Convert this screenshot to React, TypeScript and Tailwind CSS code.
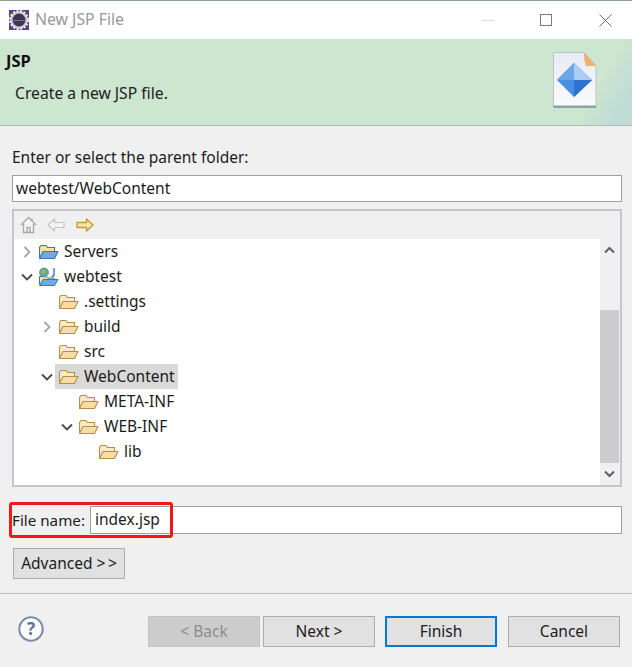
const FONT = "[font-family:'Noto_Sans','Open_Sans',sans-serif]";

function Folder({ blue = false }: { blue?: boolean }) {
  const back = blue ? "#f9e2a6" : "#fbeac4";
  const front = blue ? "#6fa9e6" : "#f6dca6";
  const line = blue ? "#3b74b0" : "#b58d4e";
  return (
    <svg width="20" height="16" viewBox="0 0 20 16" className="shrink-0">
      <path d="M0.5 13.5V3.5L2 1.5H7L8.5 3.5H15.5V7" fill={back} stroke={line} strokeWidth="1.1" />
      <path d="M0.5 14.5L4 7.5H19L15.5 14.5Z" fill={front} stroke={line} strokeWidth="1.1" strokeLinejoin="round" />
    </svg>
  );
}

function ProjectIcon() {
  return (
    <svg width="20" height="20" viewBox="0 0 20 20" className="shrink-0">
      <path d="M0.5 17.5V9.5H7L8.5 11H15V13" fill="#f9e2a6" stroke="#3b74b0" />
      <path d="M0.5 18.5L4 12.5H19L15.5 18.5Z" fill="#6fa9e6" stroke="#3b74b0" strokeLinejoin="round" />
      <circle cx="5" cy="5.5" r="4.5" fill="#5aa6a0" stroke="#6b7f80" strokeWidth="0.7" />
      <path d="M2.5 3.5L5.5 2.5L6.5 5L4 7.5Z" fill="#8ec25a" />
      <path d="M15 1V7.5Q15 9.5 12.5 9.5" fill="none" stroke="#4a78b8" strokeWidth="1.4" />
    </svg>
  );
}

function Chevron({ open }: { open: boolean }) {
  return (
    <svg width="12" height="12" viewBox="0 0 12 12" className="shrink-0">
      {open ? (
        <path d="M1 3.5L6 8.5L11 3.5" fill="none" stroke="#4a4a4a" strokeWidth="1.9" />
      ) : (
        <path d="M3.5 1L8.5 6L3.5 11" fill="none" stroke="#a8a8a8" strokeWidth="1.9" />
      )}
    </svg>
  );
}

const rows: { label: string; pl: string; chev?: boolean; open?: boolean; icon: string; sel?: boolean }[] = [
  { label: "Servers", pl: "pl-[7px]", chev: true, open: false, icon: "blue" },
  { label: "webtest", pl: "pl-[7px]", chev: true, open: true, icon: "project" },
  { label: ".settings", pl: "pl-[41px]", icon: "folder" },
  { label: "build", pl: "pl-[27px]", chev: true, open: false, icon: "folder" },
  { label: "src", pl: "pl-[41px]", icon: "folder" },
  { label: "WebContent", pl: "pl-[27px]", chev: true, open: true, icon: "folder", sel: true },
  { label: "META-INF", pl: "pl-[61px]", icon: "folder" },
  { label: "WEB-INF", pl: "pl-[47px]", chev: true, open: true, icon: "folder" },
  { label: "lib", pl: "pl-[81px]", icon: "folder" },
];

function Row({ r }: { r: (typeof rows)[number] }) {
  return (
    <div className={`h-[25px] flex items-center ${r.pl}`}>
      {r.chev && <Chevron open={!!r.open} />}
      <div className={`flex items-center h-[25px] pl-[4px] ${r.chev ? "ml-[2px]" : ""} ${r.sel ? "bg-[#d9d9d9]" : ""}`}>
        <div className="w-[25px] flex items-center">
          {r.icon === "project" ? <ProjectIcon /> : <Folder blue={r.icon === "blue"} />}
        </div>
        <span className="pr-[3px] text-[15.5px] text-[#1c1c1c]">{r.label}</span>
      </div>
    </div>
  );
}

function Btn({ label, variant = "normal" }: { label: string; variant?: "normal" | "disabled" | "primary" }) {
  const cls =
    variant === "disabled"
      ? "bg-[#cccccc] border-[#c4c4c4] text-[#8c8c8c] border"
      : variant === "primary"
        ? "bg-[#e1e1e1] border-[#0078d7] border-2 text-[#1c1c1c]"
        : "bg-[#e1e1e1] border-[#adadad] border text-[#1c1c1c]";
  return (
    <div className={`w-[112px] h-[31px] flex items-center justify-center text-[15.5px] ${cls}`}>{label}</div>
  );
}

export default function App() {
  return (
    <div className={`w-[632px] h-[667px] bg-[#f0f0f0] flex flex-col overflow-hidden ${FONT}`}>
      <div className="h-[1px] bg-[#8ba08f]" />
      {/* Title bar */}
      <div className="h-[38px] bg-white flex items-center pl-[9px]">
        <svg width="20" height="20" viewBox="0 0 20 20" className="shrink-0">
          <rect width="20" height="20" fill="#5b3f86" />
          <circle cx="10" cy="10" r="9" fill="#c9c9cf" />
          <circle cx="10" cy="10" r="9" fill="none" stroke="#eeeeee" strokeWidth="2" strokeDasharray="2 1.6" />
          <circle cx="10" cy="10" r="6.5" fill="#3d3550" />
          <path d="M4 10.5h12" stroke="#7c6f9a" strokeWidth="1" />
        </svg>
        <span className="ml-[6px] pb-[1px] text-[15.8px] text-[#99999e]">New JSP File</span>
        <div className="ml-auto flex items-center">
          <div className="w-[12px] h-[1px] bg-[#d8d8d8] mr-[46px]" />
          <div className="w-[12px] h-[12px] border border-[#7a7a7a] mr-[47px]" />
          <svg width="13" height="13" viewBox="0 0 13 13" className="mr-[20px]">
            <path d="M0.5 0.5L12.5 12.5M12.5 0.5L0.5 12.5" stroke="#707070" strokeWidth="1" />
          </svg>
        </div>
      </div>
      {/* Header */}
      <div className="relative h-[87px] bg-[#cde6cf] border-b border-[#b4b8b4] overflow-hidden shrink-0">
        <div className="pl-[6px] pt-[12px] text-[16.5px] leading-[20px] font-bold text-[#111]">JSP</div>
        <div className="pl-[15px] pt-[12px] text-[15.7px] leading-[20px] text-[#222]">Create a new JSP file.</div>
        <div className="absolute right-0 top-0 w-[100px] h-[86px] bg-[linear-gradient(120deg,transparent_62%,#c0dcd6_85%)]" />
        <svg width="44" height="58" viewBox="0 0 44 58" className="absolute left-[553px] top-[13px]">
          <defs>
            <linearGradient id="pg" x1="0" y1="0" x2="0" y2="1">
              <stop offset="0" stopColor="#e6ecf6" />
              <stop offset="1" stopColor="#fbfbfb" />
            </linearGradient>
          </defs>
          <path d="M0.5 0.5H31L43 14V55H0.5Z" fill="url(#pg)" stroke="#b9c6c8" />
          <path d="M31 0.5L43 14H33Q31 9 31 0.5Z" fill="#efb268" />
          <path d="M0.5 53.5H43V56H0.5Z" fill="#8ba3a3" />
          <path d="M21 11L39 28L21 45L4 28Z" fill="#4a90e2" />
          <path d="M21 11L4 28H21Z" fill="#6ea6ea" />
          <path d="M21 11L39 28H21Z" fill="#a9cdf5" />
          <path d="M21 28H39L21 45Z" fill="#2f74cf" />
        </svg>
      </div>
      {/* Body */}
      <div className="flex-1 flex flex-col pl-[12px] pr-[10px] min-h-0">
        <div className="mt-[21px] text-[15.5px] leading-[20px] text-[#1c1c1c]">Enter or select the parent folder:</div>
        <div className="mt-[8px] h-[27px] bg-white border border-[#a0a0a0] flex items-center pl-[3px] text-[15.5px] text-[#1c1c1c]">webtest/WebContent</div>
        {/* Tree */}
        <div className="mt-[7px] h-[278px] border-2 border-[#c6c6ca] flex flex-col">
          <div className="h-[28px] flex items-center pl-[6px]">
            <svg width="17" height="18" viewBox="0 0 17 18">
              <path d="M1 9L8.5 1.5L16 9M3.5 8V16.5H13.5V8M7 16.5V11.5H10V16.5M12 2.5V5" fill="#f4f4f4" stroke="#a8a8a8" strokeWidth="1.4" />
            </svg>
            <svg width="18" height="14" viewBox="0 0 18 14" className="ml-[10px]">
              <path d="M1 7L7.5 1V4.5H17V9.5H7.5V13Z" fill="#f4f4f4" stroke="#c4c4c4" strokeWidth="1.2" strokeLinejoin="round" />
            </svg>
            <svg width="18" height="14" viewBox="0 0 18 14" className="ml-[11px]">
              <path d="M17 7L10.5 1V4.5H1V9.5H10.5V13Z" fill="#f9e4a6" stroke="#c79a3a" strokeWidth="1.4" strokeLinejoin="round" />
            </svg>
          </div>
          <div className="flex-1 flex min-h-0">
            <div className="flex-1 bg-white overflow-hidden">
              {rows.map((r) => (
                <Row key={r.label} r={r} />
              ))}
            </div>
            <div className="w-[20px] bg-[#f0f0f0] flex flex-col items-start">
              <div className="h-[71px] w-[19px] flex justify-center pt-[7px]">
                <svg width="11" height="8" viewBox="0 0 11 8">
                  <path d="M1 6.5L5.5 2L10 6.5" fill="none" stroke="#606060" strokeWidth="2" />
                </svg>
              </div>
              <div className="w-[19px] h-[153px] bg-[#cdcdcd]" />
              <div className="flex-1 w-[19px] flex justify-center items-center">
                <svg width="11" height="8" viewBox="0 0 11 8">
                  <path d="M1 1.5L5.5 6L10 1.5" fill="none" stroke="#606060" strokeWidth="2" />
                </svg>
              </div>
            </div>
          </div>
        </div>
        {/* File name */}
        <div className="relative mt-[19px] h-[28px] flex items-center">
          <span className="text-[15.2px] text-[#1c1c1c] w-[78px]">File name:</span>
          <div className="flex-1 h-[28px] bg-white border border-[#a0a0a0] flex items-center pl-[4px] text-[15.5px] text-[#1c1c1c]">index.jsp</div>
          <div className="absolute left-[-3px] top-[-4px] w-[164px] h-[36px] border-[3px] border-[#f01818] rounded-[3px]" />
        </div>
        <div className="mt-[14px] ml-[1px] w-[112px] h-[31px] bg-[#e1e1e1] border border-[#adadad] flex items-center justify-center text-[15.5px] text-[#1c1c1c]">Advanced &gt;&#8201;&gt;</div>
      </div>
      {/* Footer */}
      <div className="h-[74px] border-t border-[#bdbdbd] shrink-0 flex items-start pt-[22px] relative">
        <svg width="26" height="26" viewBox="0 0 26 26" className="ml-[18px]">
          <circle cx="13" cy="13" r="11.7" fill="#fdfdfd" stroke="#7b8ca8" strokeWidth="2" />
          <text x="13" y="19" textAnchor="middle" fontSize="17" fontWeight="700" fill="#5f7396" fontFamily="'Noto Sans',sans-serif">?</text>
        </svg>
        <div className="ml-[104px] flex">
          <Btn label="< Back" variant="disabled" />
          <div className="ml-[3px]"><Btn label="Next >" /></div>
          <div className="ml-[10px]"><Btn label="Finish" variant="primary" /></div>
          <div className="ml-[11px]"><Btn label="Cancel" /></div>
        </div>
      </div>
    </div>
  );
}
